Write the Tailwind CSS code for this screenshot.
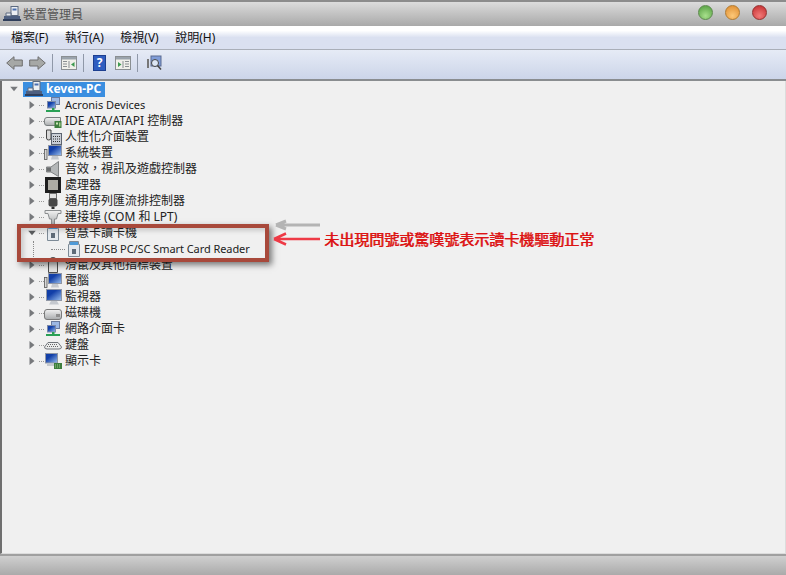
<!DOCTYPE html>
<html lang="zh-Hant">
<head>
  <meta charset="UTF-8" />
  <title>裝置管理員</title>
  <script src="https://cdn.jsdelivr.net/npm/@tailwindcss/browser@4"></script>
</head>
<body class="relative w-[786px] h-[575px] overflow-hidden flex flex-col bg-[#f0f0f0] text-[#222] font-['Noto_Sans','Noto_Sans_CJK_TC',sans-serif]">

  <svg class="absolute w-0 h-0">
    <defs>
      <linearGradient id="scr" x1="0" y1="0" x2="1" y2="1"><stop offset="0.35" stop-color="#123fa8"/><stop offset="1" stop-color="#9cc2f0"/></linearGradient>
      <linearGradient id="metal" x1="0" y1="0" x2="0" y2="1"><stop offset="0" stop-color="#f2f2f2"/><stop offset="1" stop-color="#a8abad"/></linearGradient>
    </defs>
    <symbol id="chev" viewBox="0 0 8 10"><path d="M1.5 1 L6.5 5 L1.5 9 Z" fill="#77797c"/></symbol>
    <symbol id="net" viewBox="0 0 18 16">
      <rect x="7.5" y=".5" width="8" height="7" fill="#9db8e4" stroke="#6a7b9e"/><rect x="3.5" y="4.5" width="8" height="6.5" fill="url(#scr)" stroke="#7d8aa8"/>
      <rect x="2" y="13" width="14" height="2" fill="#2aa055"/><rect x="8" y="11" width="2.5" height="3" fill="#2aa055"/>
    </symbol>
    <symbol id="ide" viewBox="0 0 18 16">
      <path d="M.5 7 Q.5 4.5 3 4.5 H16.5 V12.5 H3 Q.5 12.5 .5 10 Z" fill="url(#metal)" stroke="#7a7f80"/><rect x="10.5" y="8" width="7" height="7" fill="#3d7d3d"/><rect x="12" y="9.5" width="2" height="2" fill="#cfe5b8"/><rect x="15" y="9.5" width="1.5" height="4" fill="#a8cf90"/>
    </symbol>
    <symbol id="hid" viewBox="0 0 18 16">
      <path d="M2.5 1 H7 V9 Q7 11 4.7 11 Q2.5 11 2.5 9 Z" fill="#d9d9d9" stroke="#444"/><rect x="7.5" y="4.5" width="10" height="11" fill="#c9ced6" stroke="#5c6470"/><path d="M9 7.5 H16 M9 10 H16 M9 12.5 H16" stroke="#333" stroke-dasharray="1 1"/>
    </symbol>
    <symbol id="mon" viewBox="0 0 18 16">
      <rect x="4.5" y=".5" width="13" height="10" fill="url(#scr)" stroke="#9097a5"/><path d="M8 11 H14 L15 14.5 H7 Z" fill="#c4c8ce"/><rect x=".5" y="4.5" width="2.5" height="10" fill="#d8d8d8" stroke="#555" stroke-width=".8"/>
    </symbol>
    <symbol id="mon2" viewBox="0 0 18 16">
      <rect x="2.5" y=".5" width="15" height="11" fill="url(#scr)" stroke="#9097a5"/><path d="M7 12 H13 L15 15.5 H5 Z" fill="#c4c8ce"/>
    </symbol>
    <symbol id="snd" viewBox="0 0 18 16">
      <path d="M2.5 6 H7 L14.5 .5 V15.5 L7 11 H2.5 Z" fill="#b4b7b8" stroke="#7e8182"/><path d="M3 6.5 H7 V10.5 H3 Z" fill="#6a6d6e"/>
    </symbol>
    <symbol id="cpu" viewBox="0 0 18 16">
      <rect x="1" y="0" width="16" height="16" fill="#1e1e1e"/><rect x="4" y="3" width="10" height="10" fill="#aeaca4"/>
    </symbol>
    <symbol id="usb" viewBox="0 0 18 16">
      <rect x="5.5" y=".5" width="7" height="5" fill="#e2e2e2" stroke="#6f6f6f"/><rect x="4.5" y="5.5" width="9" height="8" rx="2" fill="#484848"/><rect x="7.5" y="13.5" width="3" height="2.5" fill="#2e2e2e"/>
    </symbol>
    <symbol id="port" viewBox="0 0 18 16">
      <path d="M1 1.5 H17 V4.5 H14 L12.5 10 H10.5 V15.5 H7.5 V10 H5.5 L4 4.5 H1 Z" fill="url(#metal)" stroke="#8a8d8f"/>
    </symbol>
    <symbol id="card" viewBox="0 0 18 16">
      <path d="M4.5 .5 H13.5 V3.5 H14.5 V15.5 H3.5 V3.5 H4.5 Z" fill="#e4e9ee" stroke="#7d8a96"/><rect x="5" y="1" width="8" height="3" fill="#4f9bd8"/><rect x="7" y="8" width="4" height="5" fill="#5e6b78"/>
    </symbol>
    <symbol id="mouse" viewBox="0 0 18 16">
      <path d="M4.5 15.5 V7 Q4.5 .5 9 .5 Q13.5 .5 13.5 7 V15.5 Z" fill="#e4e4e4" stroke="#4d4d4d"/>
    </symbol>
    <symbol id="disk" viewBox="0 0 18 16">
      <path d="M.5 7 Q.5 4.5 3 4.5 H15 Q17.5 4.5 17.5 7 V12 Q17.5 14.5 15 14.5 H3 Q.5 14.5 .5 12 Z" fill="url(#metal)" stroke="#7a7a7a"/><rect x="12" y="9" width="4" height="3" fill="#8f8f8f"/>
    </symbol>
    <symbol id="kbd" viewBox="0 0 18 16">
      <path d="M.5 10 L4 5.5 H14 L17.5 10 Q17.5 12 15 12 H3 Q.5 12 .5 10 Z" fill="#eceded" stroke="#71757a"/><path d="M4 7.5 H14 M3 9.5 H15" stroke="#666" stroke-dasharray="1 1"/>
    </symbol>
    <symbol id="vid" viewBox="0 0 18 16">
      <rect x="1.5" y=".5" width="12" height="9.5" fill="url(#scr)" stroke="#9097a5"/><path d="M3 11 H10 V13 H3 Z" fill="#c4c8ce"/><rect x="10" y="10" width="8" height="6" fill="#3d7d3d"/><path d="M11 12 H17 M11 14 H17" stroke="#9ccb88" stroke-dasharray="1 1"/>
    </symbol>
    <symbol id="pc" viewBox="0 0 18 16">
      <rect x="8" y=".5" width="7" height="9" fill="#eceff3" stroke="#5c6a80"/><rect x="9.5" y="2.5" width="4" height="2" fill="#4a6fb0"/><path d="M1 10 H17 V13 H1 Z" fill="#4d5f80"/><path d="M3 7 H8 V10 H3 Z" fill="#e6e9ee" stroke="#5c6a80"/><rect x="0" y="13" width="18" height="2" fill="#2f3e5a"/>
    </symbol>
    <symbol id="pane" viewBox="0 0 16 14">
      <rect x=".5" y=".5" width="15" height="13" fill="#f0f0ea" stroke="#8a8f92"/><rect x="1" y="1" width="14" height="2.5" fill="#9aa3ac"/><path d="M2 5.5 H6 M2 8 H6 M2 10.5 H6 M8 5 V12" stroke="#8a8f92"/><path d="M13.5 6 L10 8.5 L13.5 11 Z" fill="#3d9a50"/>
    </symbol>
    <symbol id="pane2" viewBox="0 0 16 14">
      <rect x=".5" y=".5" width="15" height="13" fill="#f0f0ea" stroke="#8a8f92"/><rect x="1" y="1" width="14" height="2.5" fill="#9aa3ac"/><path d="M10 5.5 H14 M10 8 H14 M10 10.5 H14 M8 5 V12" stroke="#8a8f92"/><path d="M3 6 L6.5 8.5 L3 11 Z" fill="#3d9a50"/>
    </symbol>
  </svg>

  <!-- 標題列 -->
  <div class="h-[26px] shrink-0 flex items-center pl-[3px] pr-[19px] border-t-2 border-[#8c8c8c] bg-gradient-to-b from-[#dcdcdc] to-[#a9a9a9]">
    <svg class="w-[18px] h-[16px] mr-[2px]"><use href="#pc"/></svg>
    <span class="text-[12px] text-[#555] mt-px">裝置管理員</span>
    <div class="ml-auto flex gap-[12px] -mt-[3px]">
      <div class="w-[15px] h-[15px] rounded-full border border-[#5d8a4e] bg-[radial-gradient(circle_at_50%_75%,#a8e08c,#4f9a3c)]"></div>
      <div class="w-[15px] h-[15px] rounded-full border border-[#b07a30] bg-[radial-gradient(circle_at_50%_75%,#fcc878,#dd8a2c)]"></div>
      <div class="w-[15px] h-[15px] rounded-full border border-[#94302f] bg-[radial-gradient(circle_at_50%_75%,#f27a78,#c22a2c)]"></div>
    </div>
  </div>

  <!-- 選單列 -->
  <div class="h-[24px] shrink-0 flex items-center pl-[11px] gap-[16.5px] text-[12px] text-[#111] bg-gradient-to-b from-white from-20% to-[#dae0f0] to-50% border-b border-[#a9aeb8]">
    <span>檔案(F)</span><span>執行(A)</span><span>檢視(V)</span><span>說明(H)</span>
  </div>

  <!-- 工具列 -->
  <div class="h-[31px] shrink-0 flex items-center pl-[6px] pb-[3px] bg-gradient-to-b from-[#e6ebf6] to-[#ccd5e9] border-b-2 border-[#8a8d90]">
    <svg class="w-[17px] h-[14px]" viewBox="0 0 17 14"><path d="M.7 7 L8 .7 V4 H16.3 V10 H8 V13.3 Z" fill="#a6a8a6" stroke="#6e6e6e"/></svg>
    <svg class="w-[17px] h-[14px] ml-[6px]" viewBox="0 0 17 14"><path d="M16.3 7 L9 .7 V4 H.7 V10 H9 V13.3 Z" fill="#a6a8a6" stroke="#6e6e6e"/></svg>
    <div class="w-px h-[18px] bg-[#8f98a8] ml-[6px]"></div>
    <svg class="w-[16px] h-[14px] ml-[8px]"><use href="#pane"/></svg>
    <div class="w-px h-[18px] bg-[#8f98a8] ml-[6px]"></div>
    <div class="w-[13px] h-[16px] ml-[9px] bg-[#2f5dc0] border border-[#1d3f90] text-white text-[12px] leading-[14px] font-bold text-center">?</div>
    <svg class="w-[16px] h-[14px] ml-[9px]"><use href="#pane2"/></svg>
    <div class="w-px h-[18px] bg-[#8f98a8] ml-[6px]"></div>
    <svg class="w-[16px] h-[16px] ml-[8px]" viewBox="0 0 16 16"><rect x="1" y="4" width="2" height="9" fill="#777"/><rect x="5" y="1" width="10" height="10" fill="#7f9cd8" stroke="#5a6a90"/><circle cx="9" cy="8" r="3.5" fill="#dce6f4" stroke="#444"/><path d="M11.5 10.5 L15 14.5" stroke="#444" stroke-width="1.5"/></svg>
  </div>

  <!-- 裝置樹 -->
  <div class="relative flex-1 border-l-2 border-[#6f6f6f] border-r border-r-[#dcdcdc] border-b border-b-[#dcdcdc] text-[12px] leading-4 flex flex-col">
    <div class="h-4 flex items-center pl-[8px]">
      <svg class="w-[8px] h-[6px]" viewBox="0 0 10 8"><path d="M0 1 H10 L5 7 Z" fill="#77797c"/></svg>
      <div class="ml-[5px] h-[15px] flex items-center bg-[#3a8ee0] pl-[2px] pr-[4px]">
        <svg class="w-[18px] h-[16px]"><use href="#pc"/></svg>
        <span class="ml-[3px] text-white font-bold">keven-PC</span>
      </div>
    </div>
    <div class="h-4 flex items-center pl-[26px]"><svg class="w-[8px] h-[10px]"><use href="#chev"/></svg><div class="ml-[3px] w-[5px] border-t border-dotted border-[#999]"></div><svg class="w-[18px] h-[16px]"><use href="#net"/></svg><span class="ml-[3px] text-[11px]">Acronis Devices</span></div>
    <div class="h-4 flex items-center pl-[26px]"><svg class="w-[8px] h-[10px]"><use href="#chev"/></svg><div class="ml-[3px] w-[5px] border-t border-dotted border-[#999]"></div><svg class="w-[18px] h-[16px]"><use href="#ide"/></svg><span class="ml-[3px]">IDE ATA/ATAPI 控制器</span></div>
    <div class="h-4 flex items-center pl-[26px]"><svg class="w-[8px] h-[10px]"><use href="#chev"/></svg><div class="ml-[3px] w-[5px] border-t border-dotted border-[#999]"></div><svg class="w-[18px] h-[16px]"><use href="#hid"/></svg><span class="ml-[3px]">人性化介面裝置</span></div>
    <div class="h-4 flex items-center pl-[26px]"><svg class="w-[8px] h-[10px]"><use href="#chev"/></svg><div class="ml-[3px] w-[5px] border-t border-dotted border-[#999]"></div><svg class="w-[18px] h-[16px]"><use href="#mon"/></svg><span class="ml-[3px]">系統裝置</span></div>
    <div class="h-4 flex items-center pl-[26px]"><svg class="w-[8px] h-[10px]"><use href="#chev"/></svg><div class="ml-[3px] w-[5px] border-t border-dotted border-[#999]"></div><svg class="w-[18px] h-[16px]"><use href="#snd"/></svg><span class="ml-[3px]">音效，視訊及遊戲控制器</span></div>
    <div class="h-4 flex items-center pl-[26px]"><svg class="w-[8px] h-[10px]"><use href="#chev"/></svg><div class="ml-[3px] w-[5px] border-t border-dotted border-[#999]"></div><svg class="w-[18px] h-[16px]"><use href="#cpu"/></svg><span class="ml-[3px]">處理器</span></div>
    <div class="h-4 flex items-center pl-[26px]"><svg class="w-[8px] h-[10px]"><use href="#chev"/></svg><div class="ml-[3px] w-[5px] border-t border-dotted border-[#999]"></div><svg class="w-[18px] h-[16px]"><use href="#usb"/></svg><span class="ml-[3px]">通用序列匯流排控制器</span></div>
    <div class="h-4 flex items-center pl-[26px]"><svg class="w-[8px] h-[10px]"><use href="#chev"/></svg><div class="ml-[3px] w-[5px] border-t border-dotted border-[#999]"></div><svg class="w-[18px] h-[16px]"><use href="#port"/></svg><span class="ml-[3px]">連接埠 (COM 和 LPT)</span></div>
    <div class="h-4 flex items-center pl-[26px]"><svg class="w-[8px] h-[6px]" viewBox="0 0 10 8"><path d="M0 1 H10 L5 7 Z" fill="#5c5e60"/></svg><div class="ml-[3px] w-[5px] border-t border-dotted border-[#999]"></div><svg class="w-[18px] h-[16px]"><use href="#card"/></svg><span class="ml-[3px]">智慧卡讀卡機</span></div>
    <div class="h-4 flex items-center pl-[31px]"><div class="h-4 border-l border-dotted border-[#888]"></div><div class="ml-[17px] w-[14px] border-t border-dotted border-[#888]"></div><svg class="w-[18px] h-[16px]"><use href="#card"/></svg><span class="ml-[1px] text-[11px] tracking-[-0.07px]">EZUSB PC/SC Smart Card Reader</span></div>
    <div class="h-4 flex items-center pl-[26px]"><svg class="w-[8px] h-[10px]"><use href="#chev"/></svg><div class="ml-[3px] w-[5px] border-t border-dotted border-[#999]"></div><svg class="w-[18px] h-[16px]"><use href="#mouse"/></svg><span class="ml-[3px]">滑鼠及其他指標裝置</span></div>
    <div class="h-4 flex items-center pl-[26px]"><svg class="w-[8px] h-[10px]"><use href="#chev"/></svg><div class="ml-[3px] w-[5px] border-t border-dotted border-[#999]"></div><svg class="w-[18px] h-[16px]"><use href="#mon"/></svg><span class="ml-[3px]">電腦</span></div>
    <div class="h-4 flex items-center pl-[26px]"><svg class="w-[8px] h-[10px]"><use href="#chev"/></svg><div class="ml-[3px] w-[5px] border-t border-dotted border-[#999]"></div><svg class="w-[18px] h-[16px]"><use href="#mon2"/></svg><span class="ml-[3px]">監視器</span></div>
    <div class="h-4 flex items-center pl-[26px]"><svg class="w-[8px] h-[10px]"><use href="#chev"/></svg><div class="ml-[3px] w-[5px] border-t border-dotted border-[#999]"></div><svg class="w-[18px] h-[16px]"><use href="#disk"/></svg><span class="ml-[3px]">磁碟機</span></div>
    <div class="h-4 flex items-center pl-[26px]"><svg class="w-[8px] h-[10px]"><use href="#chev"/></svg><div class="ml-[3px] w-[5px] border-t border-dotted border-[#999]"></div><svg class="w-[18px] h-[16px]"><use href="#net"/></svg><span class="ml-[3px]">網路介面卡</span></div>
    <div class="h-4 flex items-center pl-[26px]"><svg class="w-[8px] h-[10px]"><use href="#chev"/></svg><div class="ml-[3px] w-[5px] border-t border-dotted border-[#999]"></div><svg class="w-[18px] h-[16px]"><use href="#kbd"/></svg><span class="ml-[3px]">鍵盤</span></div>
    <div class="h-4 flex items-center pl-[26px]"><svg class="w-[8px] h-[10px]"><use href="#chev"/></svg><div class="ml-[3px] w-[5px] border-t border-dotted border-[#999]"></div><svg class="w-[18px] h-[16px]"><use href="#vid"/></svg><span class="ml-[3px]">顯示卡</span></div>
  </div>

  <!-- 狀態列 -->
  <div class="h-[21px] shrink-0 border-t-2 border-[#a0a0a0] bg-gradient-to-b from-[#d0d0d0] to-[#aaaaaa]"></div>

  <!-- 註解 -->
  <div class="absolute left-[17px] top-[224px] w-[252px] h-[38px] border-4 border-[#a8493b] shadow-[3px_3px_6px_rgba(0,0,0,0.5),inset_3px_3px_4px_rgba(0,0,0,0.15)]"></div>
  <svg class="absolute left-[272px] top-[216px] w-[50px] h-[32px] blur-[0.4px]" viewBox="0 0 50 32">
    <path d="M4 9 L14 5 M4 9 L14 13 M4 9 H48" stroke="#b4b4b4" stroke-width="3" fill="none"/>
    <path d="M2 23 L14 17.5 M2 23 L14 28.5 M2 23 H48" stroke="#ee3a46" stroke-width="2.5" fill="none"/>
  </svg>
  <span class="absolute left-[324px] top-[229px] text-[15px] leading-[20px] text-[#dc1414] [text-shadow:0.7px_0_0_#dc1414]">未出現問號或驚嘆號表示讀卡機驅動正常</span>
</body>
</html>
